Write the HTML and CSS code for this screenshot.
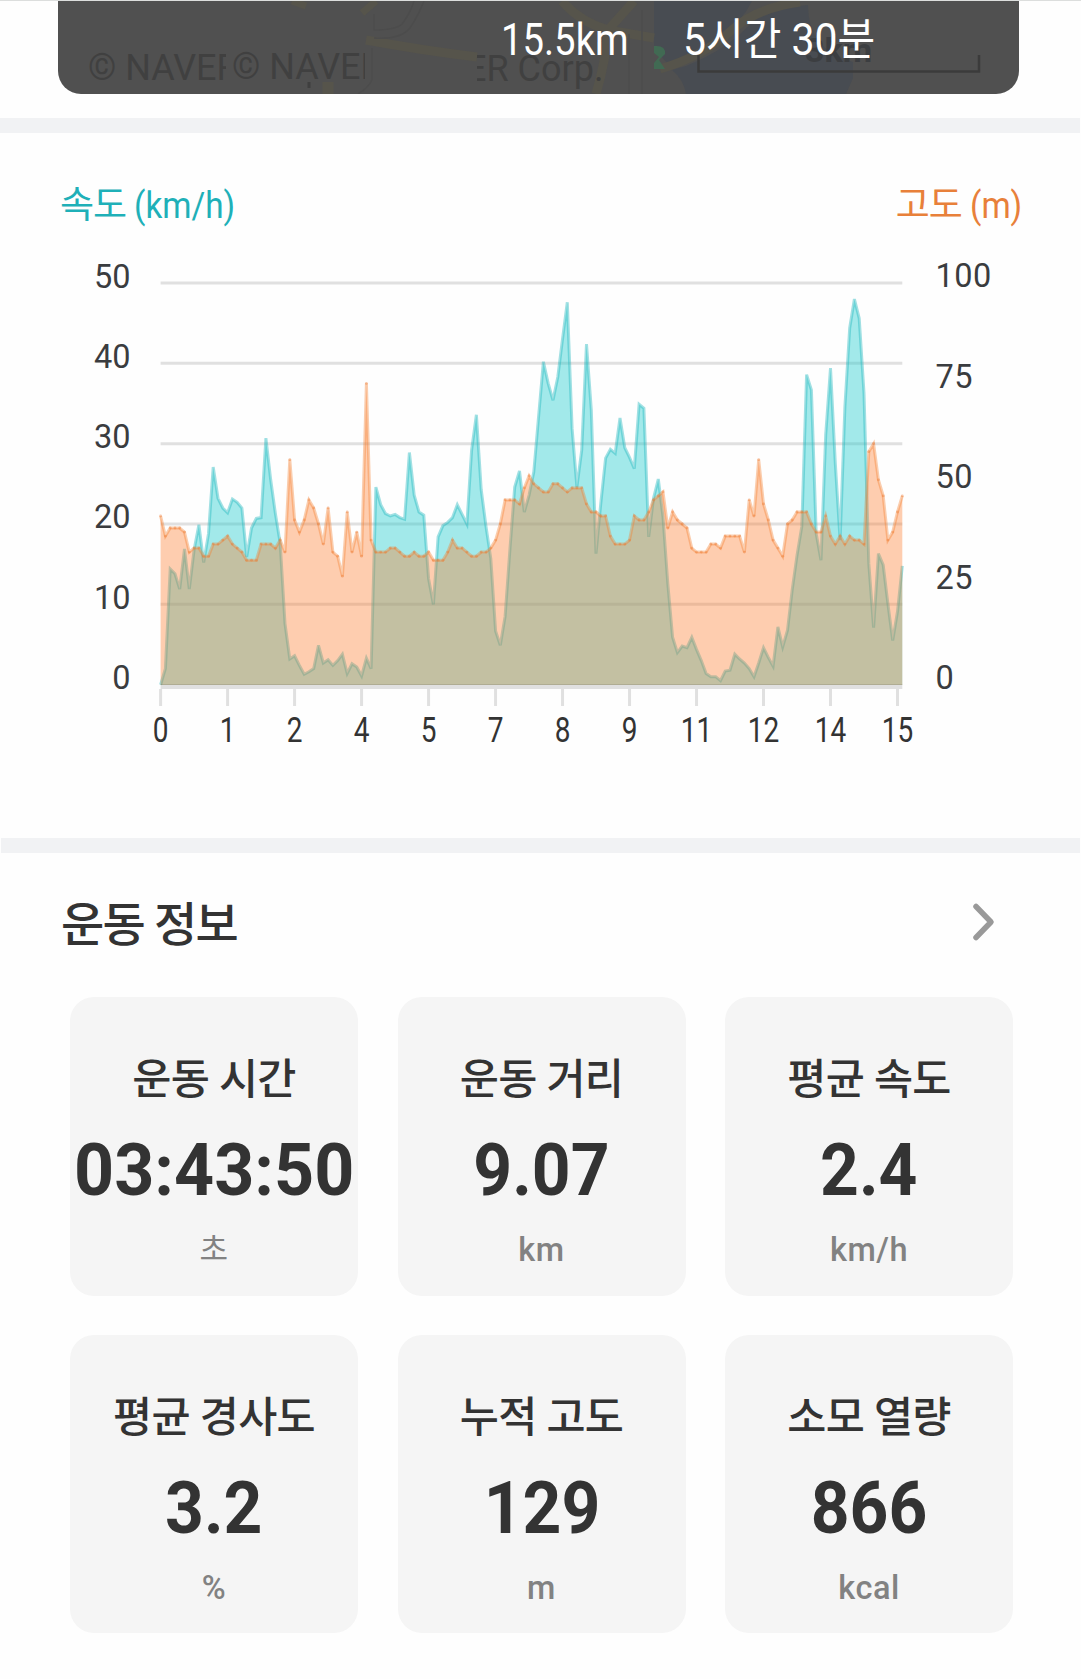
FILE: index.html
```html
<!DOCTYPE html>
<html lang="ko">
<head>
    <meta charset="UTF-8">
    <meta name="viewport" content="width=device-width, initial-scale=1.0">
    <title>운동 기록</title>
    <link rel="stylesheet" href="styles.css">
</head>
<body>
    <div class="map-section">
        <div class="map-panel">
            <svg class="map" viewBox="58 1 961 93" width="961" height="93">
                <!-- water -->
                <path d="M654 1 H752 Q742 22 722 34 Q700 52 668 64 L654 48 Z" fill="#484c52"/>
                <path d="M686 66 Q730 48 752 22 Q775 8 808 5 Q808 50 853 62 V78 L846 94 H686 Q684 80 672 70 Z" fill="#484c52"/>
                <!-- roads -->
                <g fill="none" stroke="#56544b" stroke-width="9">
                    <path d="M366 40 Q420 50 477 57"/>
                    <path d="M292 1 L306 6 M376 1 L362 13" stroke-width="7"/>
                    <path d="M562 1 Q580 22 608 30 L654 38 M634 1 L608 30 Q606 60 596 94"/>
                    <path d="M660 69 Q704 56 732 30 Q756 8 800 2"/>
                    <path d="M328 82 V94" stroke-width="11"/>
                </g>
                <g fill="none" stroke="#4c4c4c" stroke-width="1.500">
                    <path d="M374 14 V30 Q396 30 402 24 Q410 14 414 1 M374 38 Q400 40 410 28 Q418 16 424 1 M372 48 V80 Q368 88 358 94"/>
                    <path d="M629 34 V94 M642 10 V94"/>
                </g>
                <path d="M654 46 Q666 45 665 54 L659 60 L665 69 L654 69 V63 L659 57 L654 53 Z" fill="#416a53"/>
                <!-- watermark is repeated on every tile -->
                <svg x="58" y="1" width="168" height="93" viewBox="58 1 168 93"><text class="mark" x="88" y="80">© NAVER</text></svg>
                <svg x="226" y="1" width="139" height="93" viewBox="226 1 139 93"><text class="mark" x="232" y="79">© NAVER</text></svg>
                <svg x="477" y="1" width="177" height="93" viewBox="477 1 177 93"><text class="mark" x="466" y="81">ER Corp.</text></svg>
                <path d="M309 82 V88" stroke="#3f3f3f" stroke-width="3"/>
                <text class="scale-text" x="805" y="62">3km</text>
                <path d="M698.500 55 V71.500 H979 V55" fill="none" stroke="#3b3b3b" stroke-width="2.500"/>
            </svg>
            <div class="summary">
                <span class="distance">15.5km</span>
                <span class="duration">5시간 30분</span>
            </div>
        </div>
    </div>

    <div class="chart-section">
        <div class="chart-titles">
            <div class="speed-title">속도 <span>(km/h)</span></div>
            <div class="alt-title">고도 <span>(m)</span></div>
        </div>
        <svg id="chart" viewBox="0 0 1081 520" width="1081" height="520"></svg>
    </div>

    <div class="info-section">
        <div class="info-header">
            <h2>운동 정보</h2>
            <svg width="24" height="40" viewBox="0 0 24 40">
                <path d="M4 4.500 L19 20 L4 35.500" fill="none" stroke="#999" stroke-width="5.500" stroke-linecap="round" stroke-linejoin="round"/>
            </svg>
        </div>
        <div class="cards">
            <div class="card">
                <div class="label">운동 시간</div>
                <div class="value time">03:43:50</div>
                <div class="unit ko">초</div>
            </div>
            <div class="card">
                <div class="label">운동 거리</div>
                <div class="value">9.07</div>
                <div class="unit">km</div>
            </div>
            <div class="card">
                <div class="label">평균 속도</div>
                <div class="value">2.4</div>
                <div class="unit">km/h</div>
            </div>
            <div class="card">
                <div class="label">평균 경사도</div>
                <div class="value">3.2</div>
                <div class="unit">%</div>
            </div>
            <div class="card">
                <div class="label">누적 고도</div>
                <div class="value">129</div>
                <div class="unit">m</div>
            </div>
            <div class="card">
                <div class="label">소모 열량</div>
                <div class="value">866</div>
                <div class="unit">kcal</div>
            </div>
        </div>
    </div>

    <script src="chart.js"></script>
</body>
</html>
```
FILE: styles.css
```css
body {
    margin: 0;
    background-color: #fefefe;
    font-family: Roboto, "Noto Sans CJK KR", sans-serif;
    color: #333;
    width: 1081px;
    height: 1679px;
    overflow: hidden;
}

.map-section {
    box-sizing: border-box;
    height: 118px;
    border-top: 1px solid #dcdedd;
    padding: 0 62px 0 58px;
}

.map-panel {
    position: relative;
    height: 93px;
    background-color: #505050;
    border-radius: 0 0 23px 23px;
    overflow: hidden;
}

.map {
    display: block;
}

.mark {
    font-size: 36px;
    fill: #404040;
}

.scale-text {
    font-size: 34px;
    font-weight: bold;
    fill: #3c3e41;
}

/* lies over the map */
.summary {
    position: absolute;
    top: 1px;
    left: 443px;
    height: 76px;
    display: flex;
    align-items: center;
    color: #fff;
    font-size: 44px;
    line-height: 60px;
    white-space: nowrap;
}

.distance {
    width: 182px;
    transform: scaleX(0.87);
    transform-origin: left;
}

.duration {
    transform: scaleX(0.93);
    transform-origin: left;
}

.chart-section {
    box-sizing: border-box;
    height: 720px;
    margin: 0 1px 0 0;
    border-top: 15px solid #f1f2f4;
    padding-top: 46px;
}

.chart-titles {
    display: flex;
    justify-content: space-between;
    height: 61px;
    padding: 0 59px 0 60px;
    font-size: 37px;
    line-height: 54px;
    letter-spacing: -1px;
}

.chart-titles span {
    display: inline-block;
    letter-spacing: 0;
    transform: scaleX(0.9);
    transform-origin: left;
}

.speed-title {
    color: #1fb0b8;
}

.alt-title {
    color: #e8803a;
    margin-right: -7px;
}

#chart {
    display: block;
}

#chart text {
    font-size: 32.5px;
    fill: #3a3c3f;
}

#chart .x-label {
    font-size: 35px;
    fill: #333;
    text-anchor: middle;
}

#chart .left-label {
    text-anchor: end;
}

.info-section {
    margin: 0 1px;
    border-top: 15px solid #f1f2f4;
}

.info-header {
    display: flex;
    justify-content: space-between;
    align-items: center;
    height: 138px;
    padding: 0 84px 0 60px;
}

.info-header h2 {
    margin: 5px 0 0;
    font-size: 47px;
    font-weight: 500;
    letter-spacing: -1.7px;
    line-height: 60px;
}

.cards {
    display: grid;
    grid-template-columns: repeat(3, 288px);
    grid-auto-rows: 298.5px;
    gap: 39px 39.5px;
    margin: 6px 0 0 69px;
}

.card {
    box-sizing: border-box;
    padding-top: 58px;
    background-color: #f5f5f5;
    border-radius: 24px;
    display: flex;
    flex-direction: column;
    align-items: center;
    white-space: nowrap;
}

.label {
    font-size: 42.5px;
    font-weight: 500;
    line-height: 50px;
    letter-spacing: -0.7px;
}

.value {
    margin-top: 31px;
    font-size: 72px;
    font-weight: bold;
    line-height: 70px;
    transform: scaleX(0.94);
}

.value.time {
    transform: scaleX(0.972);
}

.unit {
    margin-top: 24px;
    font-size: 32.5px;
    font-weight: 500;
    line-height: 40px;
    letter-spacing: 0.5px;
    color: #828282;
}

.unit.ko {
    font-size: 31px;
    font-weight: normal;
}
```
FILE: chart.js
```javascript
// km/h, 0 - 50
const speed = [
    0, 2, 14.4, 13.8, 11.9, 16.9, 11.9, 16.8, 19.9, 15.2, 18.8, 27.1, 23.2, 22,
    21.4, 23.1, 22.7, 22, 15.9, 19.5, 20.7, 20.8, 30.7, 25.5, 21.3, 17.6, 7.6, 3.2,
    3.6, 2.4, 1.3, 1.6, 2, 4.9, 2.7, 3.1, 2.4, 3, 3.8, 1.4, 2.6, 2.2,
    1.1, 3.3, 2, 24.6, 22.4, 21.3, 21, 21.2, 20.8, 20.6, 28.9, 23.6, 21.5, 21.1,
    13.2, 10, 18.4, 19.8, 20.2, 20.8, 22.4, 21.2, 20, 29.2, 33.6, 24.3, 19.7, 15.7,
    6.7, 4.9, 8.5, 16.8, 24.6, 26.6, 21.5, 23.6, 26.5, 33.4, 40.2, 37.5, 35.4, 38.3,
    43.1, 47.6, 31.9, 24.6, 29.2, 42.4, 34.2, 16.3, 22.6, 28.2, 29.3, 28.8, 33.2, 29.5,
    28.3, 26.9, 34.9, 34.4, 18.4, 23.2, 25.6, 20.9, 12.6, 5.9, 4, 4.8, 4.6, 5.9,
    4.4, 3, 1.4, 1, 1, 0.5, 1.7, 1.8, 3.8, 3.2, 2.7, 2, 1, 2.7,
    4.6, 3.4, 2.3, 7.2, 4.7, 6.8, 11.8, 16.1, 19.7, 38.6, 36.7, 18.8, 15.5, 31.1,
    39.4, 27.6, 18, 34.6, 44.4, 48, 45.6, 36.3, 15.1, 7.1, 16.3, 14.9, 10.1, 5.5,
    9.1, 14.8
];

// m, 0 - 100
const altitude = [
    42, 37, 39, 39, 39, 38, 33, 34, 34, 32, 32, 35, 35, 36,
    37, 35, 34, 33, 31, 31, 31, 35, 35, 35, 34, 36, 33, 56,
    41, 38, 41, 46, 44, 40, 35, 44, 33, 32, 27, 43, 33, 38,
    32, 75, 36, 33, 33, 33, 34, 34, 33, 32, 32, 33, 32, 32,
    33, 31, 31, 31, 33, 36, 34, 34, 33, 32, 32, 33, 33, 34,
    36, 40, 46, 46, 46, 45, 49, 52, 50, 49, 48, 48, 50, 50,
    49, 48, 49, 49, 49, 45, 43, 43, 42, 42, 37, 35, 35, 35,
    36, 42, 41, 41, 43, 46, 47, 48, 39, 43, 41, 40, 39, 34,
    33, 33, 33, 35, 35, 34, 37, 37, 37, 37, 33, 46, 42, 56,
    45, 41, 36, 34, 32, 40, 41, 43, 43, 43, 40, 38, 38, 42,
    37, 35, 37, 35, 37, 36, 36, 35, 58, 60, 51, 47, 36, 38,
    43, 47
];

const left = 160.6;
const right = 902.3;
const top0 = 43;
const bottom = 444.7;
const height = bottom - top0;
const step = (right - left) / (speed.length - 1);

const px = i => (left + i * step).toFixed(1);
const py = (v, max) => (bottom - v / max * height).toFixed(1);

let svg = '';

// grid
for (let i = 1; i <= 5; i++) {
    const y = bottom - i * height / 5;
    svg += `<line x1="${left}" x2="${right}" y1="${y}" y2="${y}" stroke="#e0e0e0" stroke-width="3"/>`;
}
svg += `<line x1="${left}" x2="${right}" y1="447" y2="447" stroke="#e0e0e0" stroke-width="4"/>`;

function area(values, max, fill, stroke) {
    const line = values.map((v, i) => px(i) + ',' + py(v, max)).join(' ');
    svg += `<polygon points="${left},${bottom} ${line} ${right},${bottom}" fill="${fill}"/>`;
    svg += `<polyline points="${line}" fill="none" stroke="${stroke}" stroke-width="3"/>`;
}

area(speed, 50, 'rgba(25,202,205,0.4)', 'rgba(25,180,188,0.4)');
area(altitude, 100, 'rgba(255,119,36,0.36)', 'rgba(245,125,45,0.38)');

altitude.forEach((v, i) => {
    svg += `<circle cx="${px(i)}" cy="${py(v, 100)}" r="1.4" fill="rgba(235,115,40,0.4)"/>`;
});

svg += `<line x1="${left}" x2="${right}" y1="444.5" y2="444.5" stroke="rgba(120,110,80,0.35)" stroke-width="1"/>`;

// labels
[50, 40, 30, 20, 10, 0].forEach((n, i) => {
    svg += `<text class="left-label" x="130.5" y="${47.5 + i * 80.3}">${n}</text>`;
});
[100, 75, 50, 25, 0].forEach((n, i) => {
    svg += `<text x="935.5" y="${47 + i * 100.5}" letter-spacing="0.5">${n}</text>`;
});
[0, 1, 2, 4, 5, 7, 8, 9, 11, 12, 14, 15].forEach((n, i) => {
    const x = left + i * step * 14;
    svg += `<line x1="${x}" x2="${x}" y1="449" y2="466" stroke="#e0e0e0" stroke-width="3"/>`;
    svg += `<text class="x-label" transform="translate(${x} 501.5) scale(0.8 1)">${n}</text>`;
});

document.getElementById('chart').innerHTML = svg;
```
